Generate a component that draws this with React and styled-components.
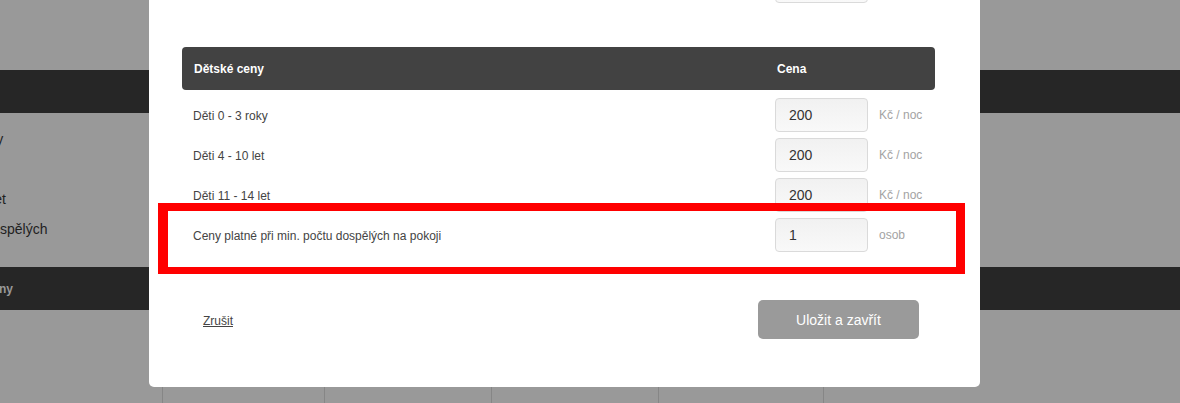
import React from "react";
import styled, { createGlobalStyle } from "styled-components";

const Global = createGlobalStyle`
  html, body { margin: 0; padding: 0; }
  body { font-family: "Liberation Sans", Arial, sans-serif; background: #999; }
  * { box-sizing: border-box; }
`;

const Screen = styled.div`
  position: relative;
  width: 1180px;
  height: 403px;
  overflow: hidden;
  background: #999;
`;

/* ---------- dimmed page behind the dialog ---------- */
const Page = styled.div`
  display: flex;
  flex-direction: column;
  padding-top: 70px;
`;

const PageBar = styled.div`
  height: 43px;
  background: #262626;
  display: flex;
  align-items: center;
  color: #999;
  font-size: 12px;
  font-weight: bold;
  white-space: nowrap;
`;

const PageBarTitle = styled.span`
  margin-left: -57px;
`;

const PageList = styled.ul`
  list-style: none;
  margin: 0 0 0 -84px;
  padding: 11px 0 23px;
`;

const PageItem = styled.li`
  height: 30px;
  line-height: 30px;
  font-size: 14px;
  color: #1f1f1f;
  white-space: nowrap;
`;

const PageTable = styled.div`
  display: flex;
  margin: 77px 0 0 162px;
  height: 20px;
`;

const PageCol = styled.div`
  width: ${(p) => p.$w}px;
  border-left: 1px solid #868686;
`;

/* ---------- dialog ---------- */
const Dialog = styled.div`
  position: absolute;
  left: 149px;
  top: -40px;
  width: 831px;
  height: 427px;
  background: #fff;
  border-radius: 0 0 5px 5px;
  padding: 9px 45px 48px 33px;
  display: flex;
  flex-direction: column;
`;

const Grid = styled.div`
  display: grid;
  grid-template-columns: ${(p) => p.$first || 582}px 93px auto;
  align-items: center;
`;

const PrevRow = styled(Grid)`
  height: 34px;
  padding-left: 11px;
`;

const Head = styled(Grid)`
  margin-top: 44px;
  height: 43px;
  background: #424242;
  border-radius: 4px;
  padding-left: 12px;
  color: #fff;
  font-size: 12px;
  font-weight: bold;
`;

const HeadCell = styled.div`
  padding-left: ${(p) => p.$inset || 0}px;
`;

const Rows = styled.div`
  margin-top: 5px;
  display: flex;
  flex-direction: column;
`;

const Row = styled(Grid)`
  height: 40px;
  padding-left: 11px;
`;

const Label = styled.div`
  font-size: 12px;
  color: #444;
  padding-top: 2px;
`;

const Field = styled.input`
  width: 93px;
  height: 34px;
  border: 1px solid #dadada;
  border-radius: 4px;
  background: linear-gradient(to bottom, #f1f1f1, #f9f9f9);
  padding: 0 0 0 13px;
  font-family: "Liberation Sans", Arial, sans-serif;
  font-size: 14px;
  color: #333;
  outline: none;
`;

const Unit = styled.span`
  margin-left: 11px;
  font-size: 12px;
  color: #a3a3a3;
`;

const Footer = styled.div`
  margin-top: 45px;
  display: flex;
  align-items: center;
  justify-content: space-between;
  padding: 0 16px 0 21px;
`;

const Cancel = styled.a`
  font-size: 12px;
  color: #444;
  text-decoration: underline;
  margin-top: 3px;
`;

const Save = styled.button`
  width: 161px;
  height: 39px;
  border: none;
  border-radius: 5px;
  background: #9a9a9a;
  color: #fff;
  font-family: "Liberation Sans", Arial, sans-serif;
  font-size: 14px;
`;

/* ---------- annotation ---------- */
const Highlight = styled.div`
  position: absolute;
  left: 158px;
  top: 203px;
  width: 807px;
  height: 71px;
  border-style: solid;
  border-color: #ff0000;
  border-width: 8px 9px 7px 10px;
  pointer-events: none;
`;

const rows = [
  { label: "Děti 0 - 3 roky", value: "200", unit: "Kč / noc" },
  { label: "Děti 4 - 10 let", value: "200", unit: "Kč / noc" },
  { label: "Děti 11 - 14 let", value: "200", unit: "Kč / noc" },
  { label: "Ceny platné při min. počtu dospělých na pokoji", value: "1", unit: "osob" },
];

export default function App() {
  return (
    <Screen>
      <Global />
      <Page>
        <PageBar />
        <PageList>
          <PageItem>Děti 0 - 3 roky</PageItem>
          <PageItem>Děti 4 - 10 let</PageItem>
          <PageItem>Děti 11 - 14 let</PageItem>
          <PageItem>Min. počet dospělých</PageItem>
        </PageList>
        <PageBar>
          <PageBarTitle>Dětské ceny</PageBarTitle>
        </PageBar>
        <PageTable>
          <PageCol $w={162} />
          <PageCol $w={167} />
          <PageCol $w={167} />
          <PageCol $w={165} />
          <PageCol $w={200} />
        </PageTable>
      </Page>

      <Dialog>
        <PrevRow>
          <span />
          <Field defaultValue="" readOnly />
        </PrevRow>
        <Head $first={581}>
          <HeadCell>Dětské ceny</HeadCell>
          <HeadCell $inset={2}>Cena</HeadCell>
        </Head>
        <Rows>
          {rows.map((r) => (
            <Row key={r.label}>
              <Label>{r.label}</Label>
              <Field defaultValue={r.value} readOnly />
              <Unit>{r.unit}</Unit>
            </Row>
          ))}
        </Rows>
        <Footer>
          <Cancel href="#">Zrušit</Cancel>
          <Save type="button">Uložit a zavřít</Save>
        </Footer>
      </Dialog>

      <Highlight />
    </Screen>
  );
}
